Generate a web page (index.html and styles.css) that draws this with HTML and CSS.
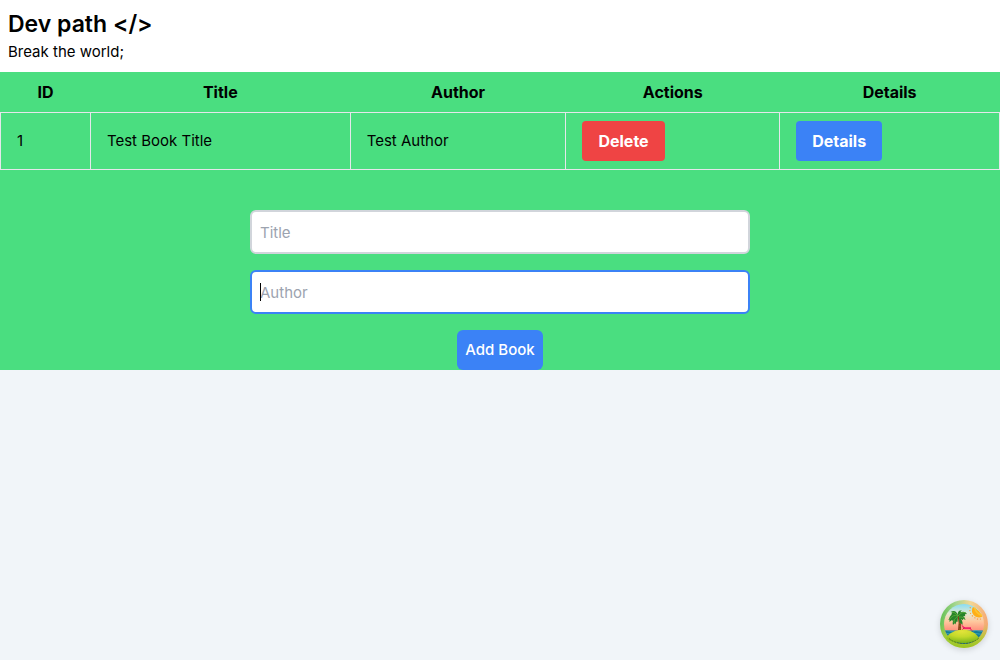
FILE: index.html
```html
<!DOCTYPE html>
<html lang="en">
<head>
<meta charset="utf-8">
<meta name="viewport" content="width=device-width, initial-scale=1">
<title>Dev path</title>
<link rel="stylesheet" href="styles.css">
</head>
<body>
<header class="site-header">
  <h1 class="site-title">Dev path &lt;/&gt;</h1>
  <p class="tagline">Break the world;</p>
</header>
<main class="library">
  <table class="books">
    <colgroup>
      <col class="col-id"><col class="col-title"><col class="col-author"><col class="col-actions"><col class="col-details">
    </colgroup>
    <thead>
      <tr><th scope="col">ID</th><th scope="col">Title</th><th scope="col">Author</th><th scope="col">Actions</th><th scope="col">Details</th></tr>
    </thead>
    <tbody>
      <tr>
        <td>1</td>
        <td>Test Book Title</td>
        <td>Test Author</td>
        <td><button class="btn btn-delete" type="button">Delete</button></td>
        <td><button class="btn btn-details" type="button">Details</button></td>
      </tr>
    </tbody>
  </table>
  <form class="book-form">
    <div class="field-wrap"><input class="field" type="text" name="title" placeholder="Title" aria-label="Title"></div>
    <div class="field-wrap field-wrap-active"><input class="field field-active" type="text" name="author" placeholder="Author" aria-label="Author" autofocus></div>
    <button class="btn-add" type="submit">Add Book</button>
  </form>
</main>
<button class="devtools" type="button" aria-label="Open query devtools">
  <svg class="devtools-logo" viewBox="0 0 48 48" aria-hidden="true">
    <defs>
      <linearGradient id="ring" x1="0" y1="0.3" x2="1" y2="0.4">
        <stop offset="0" stop-color="#62c04f"/>
        <stop offset="0.3" stop-color="#a5d690"/>
        <stop offset="0.6" stop-color="#f3d795"/>
        <stop offset="1" stop-color="#f5a873"/>
      </linearGradient>
      <linearGradient id="ring-base" x1="0" y1="0" x2="0" y2="1">
        <stop offset="0.5" stop-color="#a9cc2a" stop-opacity="0"/>
        <stop offset="0.8" stop-color="#a9cc2a" stop-opacity="0.85"/>
        <stop offset="1" stop-color="#98c31f"/>
      </linearGradient>
      <linearGradient id="sky" x1="0" y1="0" x2="0" y2="1">
        <stop offset="0.08" stop-color="#86dcf4"/>
        <stop offset="0.28" stop-color="#e2ead2"/>
        <stop offset="0.45" stop-color="#ffc79d"/>
        <stop offset="0.65" stop-color="#ff8d7a"/>
      </linearGradient>
      <radialGradient id="sand" cx="0.48" cy="0.15" r="0.8">
        <stop offset="0" stop-color="#e3e33a"/>
        <stop offset="0.5" stop-color="#c3d92a"/>
        <stop offset="1" stop-color="#7fb81c"/>
      </radialGradient>
      <clipPath id="scene"><circle cx="24" cy="24" r="20"/></clipPath>
    </defs>
    <circle cx="24" cy="24" r="24" fill="url(#ring)"/>
    <circle cx="24" cy="24" r="24" fill="url(#ring-base)"/>
    <g clip-path="url(#scene)">
      <rect width="48" height="48" fill="url(#sky)"/>
      <path d="M2 30.5h44v14H2z" fill="#137c98"/>
      <path d="M3 31q3-1 6 0t6 0m18 0q3-1 6 0t6 0M4 34q3-1 6 0t5 0m18 0q3-1 6 0t6 0" fill="none" stroke="#42a9b8" stroke-width="0.8"/>
    </g>
    <path d="M6 38C9 33 16 29.5 23 29.5S36 33 39 38C36 41.5 31 43 24 43S10 42 6 38z" fill="url(#sand)"/>
    <path d="M9 38.5q6 5 14.5 5t15-5" fill="none" stroke="#4c6e1b" stroke-width="0.8" stroke-dasharray="2 1"/>
    <path d="M33 7A20 20 0 0 1 42.5 16.5C38 19 32.5 16 32 11.5C31.8 9.5 32.2 8 33 7z" fill="#ffae17"/>
    <path d="M34.5 7.5q1.5 6 7.5 8" fill="none" stroke="#ffc52e" stroke-width="1.5"/>
    <path d="M30.5 7q-2 5 2 9q4 4 8.500 3" fill="none" stroke="#ff9e3d" stroke-width="1.2" stroke-dasharray="1.2 1.8"/>
    <path d="M17.5 16q2 7 0.5 14h3q0.500-8-2-14z" fill="#874319"/>
    <path d="M18 20h2m-1 3h2m-2 3h2m-2 3h2" stroke="#b96631" stroke-width="0.6"/>
    <path d="M18 16C14 13 10 14 9 19L8 20l1.500-.4L9.500 22l2.200-2L12 21l2-1.700-.3 2 2.300-3.200zM18 16C14 17 12 21 13 25l1.700-1.800.6 1.400 1.200-3.100 1 .4zM18 16C21 14 25 16 25.500 20l-2.200-1.200-.4 1.400-2-1.500zM19 17C22 19 23 22 22.500 25l-2-2-.8.500-.5-3zM18 15.500C20 12 24 10 27 14l-2 .2.200 2-3-.4-1.200 1zM18 16C17 11 14 10 10.500 12l2 .6-1.500 1.800 3-.2 1.200 1.400zM18 16C17 12 19 10 22 10.500l-1.400 1 .4 1.600-2 .8z" fill="#27832a"/>
    <path d="M18 16Q13 14 10 19m8-3Q22 11 26 13m-8 3Q13 19 14 23m5-6q3-1 6 2m-7-3Q15 12 12 12" fill="none" stroke="#5caf37" stroke-width="0.8"/>
    <path d="M21 24l3.500 3.200H31v1.800h-7.500z" fill="#f52369"/>
    <path d="M22.500 29.500l2-2m5.500 1l2 2" fill="none" stroke="#da174e" stroke-width="1"/>
  </svg>
</button>
</body>
</html>
```
FILE: styles.css
```css
*, *::before, *::after { box-sizing: border-box; }

body {
  margin: 0;
  background: #f1f5f9;
  color: #000;
  font-family: Inter, "Liberation Sans", sans-serif;
  font-size: 15px;
  line-height: 24px;
}

button, input { font: inherit; }

.site-header { padding: 8px; background: #fff; }
.site-title { margin: 0; font-size: 23px; font-weight: 600; line-height: 32px; }
.tagline { margin: 0; }

.library { background: #4ade80; }

.books { width: 100%; table-layout: fixed; border-collapse: collapse; }
.col-id { width: 9%; }
.col-title { width: 26%; }
.col-author { width: 21.6%; }
.col-actions { width: 21.4%; }
.col-details { width: 22%; }
.books th { padding: 8px 16px; font-size: 16px; font-weight: 700; text-align: center; }
.books td { padding: 8px 16px; border: 1px solid #e5e7eb; }

.btn {
  display: block;
  padding: 8px 16px;
  border: 0;
  border-radius: 4px;
  color: #fff;
  font-size: 16px;
  font-weight: 700;
  cursor: pointer;
}
.btn-delete { background: #ef4444; }
.btn-details { background: #3b82f6; }

.book-form {
  display: flex;
  flex-direction: column;
  align-items: center;
  gap: 16px;
  padding-top: 40px;
}
.field-wrap { position: relative; width: 50%; }
.field {
  display: block;
  width: 100%;
  height: 44px;
  padding: 8px;
  border: 2px solid #d1d5db;
  border-radius: 6px;
  outline: none;
  background: #fff;
  color: #000;
  caret-color: transparent;
}
.field::placeholder { color: #9ca3af; opacity: 1; }
.field-active, .field:focus { border-color: #3b82f6; }

/* Text cursor of the active field */
.field-wrap-active::after {
  content: "";
  position: absolute;
  top: 13px;
  left: 10px;
  width: 1px;
  height: 18px;
  background: #000;
}

.btn-add {
  padding: 8px;
  border: 0;
  border-radius: 6px;
  background: #3b82f6;
  color: #fff;
  font-weight: 500;
  cursor: pointer;
}

.devtools {
  position: fixed;
  right: 12px;
  bottom: 12px;
  width: 48px;
  height: 48px;
  padding: 0;
  border: 0;
  border-radius: 50%;
  background: none;
  box-shadow: 0 2px 6px rgb(0 0 0 / 15%);
  cursor: pointer;
}
.devtools-logo { display: block; width: 100%; height: 100%; }
```
